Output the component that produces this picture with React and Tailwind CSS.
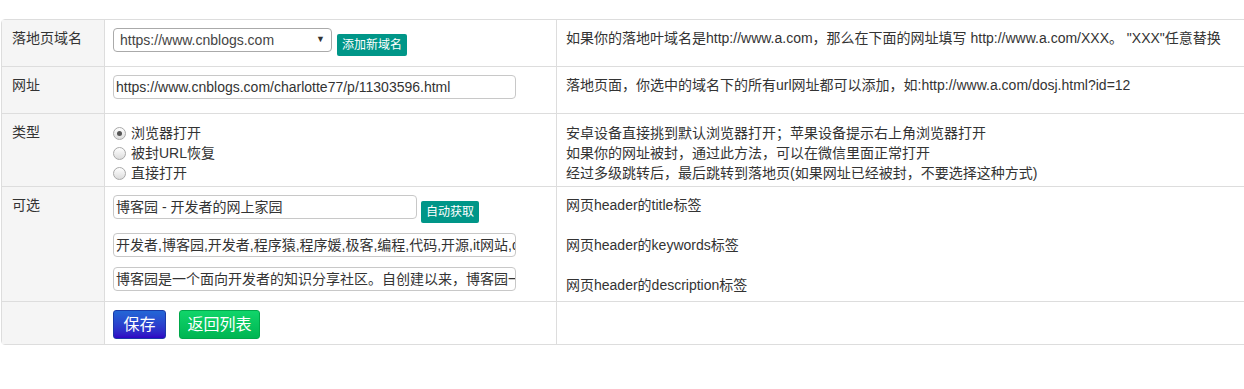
const font = { fontFamily: '"Liberation Sans", "Noto Sans CJK SC", Arial, sans-serif' };

function Radio({ checked, label }) {
  return (
    <label className="flex items-center h-5">
      <span className="w-[13px] h-[13px] rounded-full border border-[#a9a9a9] bg-gradient-to-b from-white to-[#dcdcdc] flex items-center justify-center">
        {checked && <span className="w-[5px] h-[5px] rounded-full bg-[#555]" />}
      </span>
      <span className="ml-[5px]">{label}</span>
    </label>
  );
}

function TextBox({ value, width }) {
  return (
    <div
      className={`${width} h-[24px] border border-[#c8c8c8] rounded-[4px] bg-white pl-[2px] leading-[22px] text-[14px] text-[#333] whitespace-nowrap overflow-hidden`}
    >
      {value}
    </div>
  );
}

function Row({ height, last, label, children, note }) {
  return (
    <div className={`grid grid-cols-[103px_452px_1fr] ${height} ${last ? "" : "border-b border-[#ddd]"}`}>
      <div className="bg-[#f5f5f5] border-r border-[#ddd] pl-[10px] pt-2 leading-5">{label}</div>
      <div className="border-r border-[#ddd] pl-2 pt-2">{children}</div>
      <div className="pl-[9px] pt-2 leading-5">{note}</div>
    </div>
  );
}

export default function App() {
  return (
    <div className="w-full min-h-[389px] bg-white overflow-hidden text-[14px] text-[#333]" style={font}>
      <div className="mt-[19px] ml-px w-[1300px] border border-[#ddd] rounded-[4px]">
        <Row
          height="h-[47px]"
          label="落地页域名"
          note={<span>如果你的落地叶域名是http://www.a.com，那么在下面的网址填写 http://www.a.com/XXX。 "XXX"任意替换</span>}
        >
          <div className="flex items-start">
            <div className="w-[219px] h-[24px] border border-[#aaa] rounded-[4px] bg-white flex items-center justify-between pl-[6px] pr-[6px] text-[#444]">
              <span className="leading-5">https://www.cnblogs.com</span>
              <span className="text-[9px] text-[#333]">▼</span>
            </div>
            <button className="ml-[5px] mt-[6px] w-[70px] h-[22px] bg-[#009688] rounded-[2px] text-white text-[12px] leading-[22px]">
              添加新域名
            </button>
          </div>
        </Row>

        <Row
          height="h-[47px]"
          label="网址"
          note={<span>落地页面，你选中的域名下的所有url网址都可以添加，如:http://www.a.com/dosj.html?id=12</span>}
        >
          <TextBox value="https://www.cnblogs.com/charlotte77/p/11303596.html" width="w-[403px]" />
        </Row>

        <Row
          height="h-[73px]"
          label="类型"
          note={
            <div className="pt-px">
              <div>安卓设备直接挑到默认浏览器打开；苹果设备提示右上角浏览器打开</div>
              <div>如果你的网址被封，通过此方法，可以在微信里面正常打开</div>
              <div>经过多级跳转后，最后跳转到落地页(如果网址已经被封，不要选择这种方式)</div>
            </div>
          }
        >
          <div className="pt-px leading-5">
            <Radio checked label="浏览器打开" />
            <Radio label="被封URL恢复" />
            <Radio label="直接打开" />
          </div>
        </Row>

        <Row
          height="h-[115px]"
          label="可选"
          note={
            <div>
              <div>网页header的title标签</div>
              <div className="h-5" />
              <div>网页header的keywords标签</div>
              <div className="h-5" />
              <div>网页header的description标签</div>
            </div>
          }
        >
          <div className="flex flex-col gap-[10px]">
            <div className="flex items-start">
              <TextBox value="博客园 - 开发者的网上家园" width="w-[304px]" />
              <button className="ml-[4px] mt-[6px] w-[58px] h-[22px] bg-[#009688] rounded-[2px] text-white text-[12px] leading-[22px]">
                自动获取
              </button>
            </div>
            <TextBox value="开发者,博客园,开发者,程序猿,程序媛,极客,编程,代码,开源,it网站,developer,programmer" width="w-[403px]" />
            <TextBox value="博客园是一个面向开发者的知识分享社区。自创建以来，博客园一直致力并专注于为开发者打造一个纯净的技术交流社区" width="w-[403px]" />
          </div>
        </Row>

        <Row height="h-[42px]" last label="" note="">
          <div className="flex gap-[13px]">
            <button className="w-[53px] h-[29px] rounded-[3px] border border-[#1a3aa8] bg-gradient-to-b from-[#2366d6] to-[#3000c4] text-white text-[16px] leading-[27px]">
              保存
            </button>
            <button className="w-[81px] h-[29px] rounded-[3px] border border-[#00a84a] bg-gradient-to-b from-[#10d56a] to-[#00b552] text-white text-[16px] leading-[27px]">
              返回列表
            </button>
          </div>
        </Row>
      </div>
    </div>
  );
}
